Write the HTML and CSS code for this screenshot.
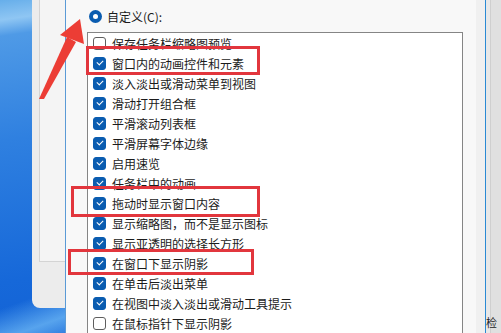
FILE: index.html
```html
<!DOCTYPE html>
<html lang="zh-CN">
<head>
<meta charset="utf-8">
<title>性能选项</title>
<link rel="stylesheet" href="styles.css">
</head>
<body>
<div class="side">
  <div class="side-inner"></div>
</div>
<div class="dialog">
  <div class="header">
    <span class="radio"></span>
    <span class="label">自定义(C):</span>
  </div>
  <div class="list">
    <div class="row"><span class="cb"></span><span>保存任务栏缩略图预览</span></div>
    <div class="row"><span class="cb on"></span><span>窗口内的动画控件和元素</span></div>
    <div class="row"><span class="cb on"></span><span>淡入淡出或滑动菜单到视图</span></div>
    <div class="row"><span class="cb on"></span><span>滑动打开组合框</span></div>
    <div class="row"><span class="cb on"></span><span>平滑滚动列表框</span></div>
    <div class="row"><span class="cb on"></span><span>平滑屏幕字体边缘</span></div>
    <div class="row"><span class="cb on"></span><span>启用速览</span></div>
    <div class="row"><span class="cb on"></span><span>任务栏中的动画</span></div>
    <div class="row"><span class="cb on"></span><span>拖动时显示窗口内容</span></div>
    <div class="row"><span class="cb on"></span><span>显示缩略图，而不是显示图标</span></div>
    <div class="row"><span class="cb on"></span><span>显示亚透明的选择长方形</span></div>
    <div class="row"><span class="cb on"></span><span>在窗口下显示阴影</span></div>
    <div class="row"><span class="cb on"></span><span>在单击后淡出菜单</span></div>
    <div class="row"><span class="cb on"></span><span>在视图中淡入淡出或滑动工具提示</span></div>
    <div class="row"><span class="cb"></span><span>在鼠标指针下显示阴影</span></div>
  </div>
</div>
<div class="right">
  <span class="edge-glyph">检</span>
</div>

<div class="mark mark1"></div>
<div class="mark mark2"></div>
<div class="mark mark3"></div>
<svg class="arrow" width="100" height="110" viewBox="0 0 100 110">
  <polygon points="39,99 44,99 76,42 67,37" fill="#ec3d35"/>
  <polygon points="80,19 60,35 84,44" fill="#ec3d35"/>
</svg>
</body>
</html>
```
FILE: styles.css
```css
html, body {
  margin: 0;
  padding: 0;
}
body {
  width: 501px;
  height: 333px;
  overflow: hidden;
  display: flex;
  position: relative;
  font-family: "Noto Sans CJK SC", "Noto Sans", sans-serif;
  font-size: 12px;
  color: #1b1b1b;
  background:
    linear-gradient(160deg, rgba(150,205,250,0) 60%, rgba(110,185,245,0.75) 66%, rgba(110,185,245,0) 72%),
    linear-gradient(172deg, #66aeea 0%, #8fc6f3 5%, #4f9ae6 9%, #2f80e0 35%, #1668d9 70%, #0f5dd3 100%);
}
.side {
  width: 33px;
  height: 308px;
  margin-left: 32px;
  background: #ececec;
  border-radius: 0 0 0 8px;
  flex: none;
}
.side-inner {
  margin-left: 7px;
  height: 261px;
  background: #f4f4f4;
  border-left: 1px solid #d4d4d4;
  border-bottom: 1px solid #d4d4d4;
}
.dialog {
  width: 410px;
  flex: none;
  background: #f8f8f8;
  border-left: 1px solid #5a9ad6;
  padding-left: 21px;
  box-sizing: border-box;
  width: 411px;
  display: flex;
  flex-direction: column;
}
.header {
  height: 32px;
  display: flex;
  align-items: center;
  padding-left: 2px;
  padding-top: 1px;
  box-sizing: border-box;
}
.radio {
  width: 13px;
  height: 13px;
  border-radius: 50%;
  background: #0a5cb0;
  position: relative;
  margin-right: 5px;
}
.radio::after {
  content: "";
  position: absolute;
  left: 4px;
  top: 4px;
  width: 5px;
  height: 5px;
  border-radius: 50%;
  background: #ffffff;
}
.label {
  font-size: 12px;
}
.list {
  width: 376px;
  box-sizing: border-box;
  flex: 1;
  background: #ffffff;
  border: 1px solid #858585;
  border-bottom: none;
  padding-top: 0;
}
.row {
  height: 20px;
  display: flex;
  align-items: center;
  padding-left: 5px;
  white-space: nowrap;
}
.cb {
  width: 13px;
  height: 13px;
  box-sizing: border-box;
  border: 1px solid #5e5e5e;
  border-radius: 3px;
  background: #fff;
  margin-right: 6px;
  flex: none;
  position: relative;
}
.cb.on {
  background: #0a5cb0;
  border-color: #0a5cb0;
}
.cb.on::after {
  content: "";
  position: absolute;
  left: 3px;
  top: 2px;
  width: 5px;
  height: 3px;
  border-left: 1.2px solid #fff;
  border-bottom: 1.2px solid #fff;
  transform: rotate(-45deg);
}
.right {
  flex: 1;
  background: linear-gradient(90deg, #f0f0f0 0, #f0f0f0 9px, #2a8ad4 9px, #2a8ad4 10px, #e8e8e8 10px, #e8e8e8 14px, #cfcfcf 14px, #cfcfcf 15px, #e0e0e0 15px);
  display: flex;
  flex-direction: column;
  justify-content: flex-end;
}
.edge-glyph {
  font-size: 11px;
  line-height: 14px;
  margin-left: 10px;
  margin-bottom: 4px;
  color: #222;
}
.mark {
  position: absolute;
  border: 3px solid #e2363d;
  box-sizing: border-box;
}
.mark1 { left: 86px; top: 46px; width: 174px; height: 29px; }
.mark2 { left: 71px; top: 186px; width: 189px; height: 31px; }
.mark3 { left: 68px; top: 249px; width: 186px; height: 26px; }
.arrow {
  position: absolute;
  left: 0;
  top: 0;
}
```
